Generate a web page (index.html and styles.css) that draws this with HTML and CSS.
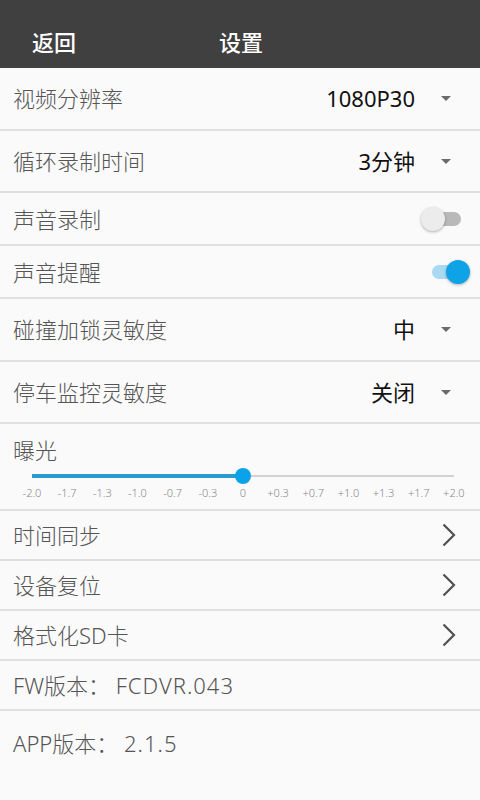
FILE: index.html
```html
<!DOCTYPE html>
<html lang="zh-CN">
<head>
<meta charset="utf-8">
<title>设置</title>
<link rel="stylesheet" href="styles.css">
</head>
<body>
<div class="app">
  <header class="topbar">
    <span class="back">返回</span>
    <span class="title">设置</span>
  </header>
  <ul class="list">
    <li class="row row-lg">
      <span class="label">视频分辨率</span>
      <span class="value">1080P30</span>
      <span class="caret"></span>
    </li>
    <li class="row row-lg">
      <span class="label">循环录制时间</span>
      <span class="value">3分钟</span>
      <span class="caret"></span>
    </li>
    <li class="row row-md row-switch-off">
      <span class="label">声音录制</span>
      <span class="switch off"><span class="thumb"></span></span>
    </li>
    <li class="row row-md row-switch-on">
      <span class="label">声音提醒</span>
      <span class="switch on"><span class="thumb"></span></span>
    </li>
    <li class="row row-lg">
      <span class="label">碰撞加锁灵敏度</span>
      <span class="value">中</span>
      <span class="caret"></span>
    </li>
    <li class="row row-lg">
      <span class="label">停车监控灵敏度</span>
      <span class="value">关闭</span>
      <span class="caret"></span>
    </li>
    <li class="exposure">
      <span class="label">曝光</span>
      <div class="slider">
        <div class="track"><div class="fill" style="width:50%"></div></div>
        <span class="knob" style="left:50%"></span>
      </div>
      <div class="ticks">
        <span>-2.0</span><span>-1.7</span><span>-1.3</span><span>-1.0</span><span>-0.7</span><span>-0.3</span><span>0</span><span>+0.3</span><span>+0.7</span><span>+1.0</span><span>+1.3</span><span>+1.7</span><span>+2.0</span>
      </div>
    </li>
    <li class="row row-sm row-link">
      <span class="label">时间同步</span>
      <svg class="chevron" width="14" height="24" viewBox="0 0 14 24"><polyline points="1.5,1.5 12,12 1.5,22.5" fill="none" stroke="#505050" stroke-width="2.2"/></svg>
    </li>
    <li class="row row-sm row-link">
      <span class="label">设备复位</span>
      <svg class="chevron" width="14" height="24" viewBox="0 0 14 24"><polyline points="1.5,1.5 12,12 1.5,22.5" fill="none" stroke="#505050" stroke-width="2.2"/></svg>
    </li>
    <li class="row row-sm row-link">
      <span class="label">格式化SD卡</span>
      <svg class="chevron" width="14" height="24" viewBox="0 0 14 24"><polyline points="1.5,1.5 12,12 1.5,22.5" fill="none" stroke="#505050" stroke-width="2.2"/></svg>
    </li>
    <li class="row row-sm">
      <span class="label">FW版本：&nbsp;<span class="ver">FCDVR.043</span></span>
    </li>
    <li class="row row-last">
      <span class="label">APP版本：&nbsp;<span class="ver">2.1.5</span></span>
    </li>
  </ul>
</div>
</body>
</html>
```
FILE: styles.css
```css
* { box-sizing: border-box; }
html, body {
  margin: 0;
  padding: 0;
  background: #fafafa;
}
body {
  font-family: "Noto Sans", "Noto Sans CJK SC", sans-serif;
}
.app {
  width: 480px;
  height: 800px;
  background: #fafafa;
  overflow: hidden;
}
.topbar {
  height: 68px;
  background: #404040;
  display: flex;
  align-items: center;
  padding: 16px 0 0 32px;
  color: #fff;
  font-size: 22px;
  line-height: 24px;
  font-weight: 500;
}
.topbar .back { width: 187px; }
.list {
  list-style: none;
  margin: 0;
  padding: 0;
}
.row {
  display: flex;
  align-items: center;
  padding: 0 29px 0 13px;
  border-bottom: 2px solid #e0e0e0;
}
.row-lg { height: 62.5px; }
.row-md { height: 53px; }
.row-sm { height: 50px; }
.row-last {
  border-bottom: none;
  align-items: flex-start;
  padding-top: 21px;
}
.label {
  flex: 1;
  font-size: 22px;
  line-height: 22px;
  font-weight: 300;
  color: #555;
  white-space: nowrap;
}
.ver { letter-spacing: 1px; }
.value {
  font-size: 22px;
  line-height: 22px;
  font-weight: 400;
  color: #111;
  margin-right: 26px;
}
.caret {
  width: 0;
  height: 0;
  border-left: 5px solid transparent;
  border-right: 5px solid transparent;
  border-top: 5px solid #6a6a6a;
  margin-top: 1px;
}
.row-link { padding-right: 24px; }
.chevron { display: block; }

/* switches */
.row-switch-off { padding-right: 19px; }
.row-switch-on { padding-right: 14px; }
.switch {
  position: relative;
  width: 34px;
  height: 14px;
  border-radius: 7px;
}
.switch.off { background: #b9b9b9; }
.switch.on { background: #a9daf2; }
.switch .thumb {
  position: absolute;
  top: -5px;
  width: 24px;
  height: 24px;
  border-radius: 50%;
}
.switch.off .thumb {
  left: -6px;
  background: #ececec;
  box-shadow: 0 1px 3px rgba(0,0,0,0.3);
}
.switch.on .thumb {
  right: -4px;
  background: #0ea2e6;
  box-shadow: 0 1px 3px rgba(0,0,0,0.3);
}

/* exposure slider */
.exposure {
  height: 87px;
  padding: 15px 0 0 13px;
  border-bottom: 2px solid #e0e0e0;
  display: flex;
  flex-direction: column;
}
.exposure .label { flex: none; }
.slider {
  position: relative;
  height: 16px;
  margin: 7px 26px 0 19px;
  display: flex;
  align-items: center;
}
.track {
  width: 100%;
  height: 2px;
  background: #d2d2d2;
  position: relative;
}
.fill {
  position: absolute;
  left: 0;
  top: -1px;
  height: 4px;
  background: #2a9bcf;
}
.knob {
  position: absolute;
  top: 0;
  width: 16px;
  height: 16px;
  margin-left: -8px;
  border-radius: 50%;
  background: #0aa2e8;
}
.ticks {
  display: flex;
  justify-content: space-between;
  margin: 2px 26px 0 19px;
  height: 14px;
}
.ticks span {
  width: 0;
  display: flex;
  justify-content: center;
  white-space: nowrap;
  font-size: 11px;
  line-height: 14px;
  font-weight: 300;
  color: #888;
}
```
